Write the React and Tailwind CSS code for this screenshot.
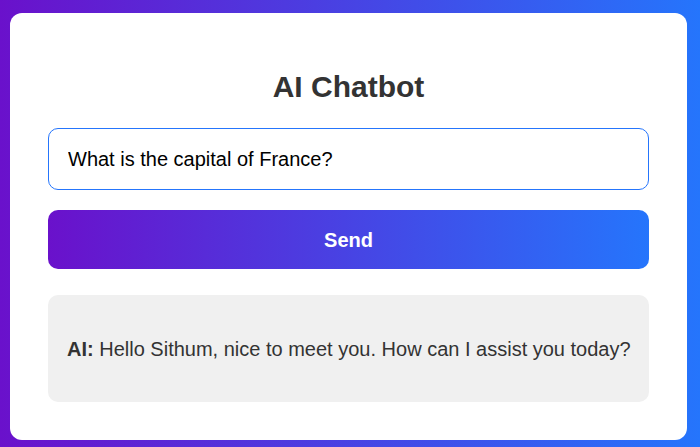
export default function App() {
  return (
    <div
      className="w-[700px] h-[447px] bg-[linear-gradient(90deg,#6a11cb,#2575fc)] pt-[13px] pl-[10px] pr-[13px]"
      style={{ fontFamily: '"Liberation Sans", Arial, sans-serif' }}
    >
      <div className="bg-white rounded-[12px] h-[427px] px-[38px] pt-[56px]">
        {/* Title */}
        <h1 className="text-center text-[30px] leading-[35px] font-bold text-[#333]">
          AI Chatbot
        </h1>

        {/* Input */}
        <input
          type="text"
          defaultValue="What is the capital of France?"
          className="mt-[24px] w-full h-[62px] border border-[#2575fc] rounded-[10px] px-[19px] text-[20px] text-black outline-none"
        />

        {/* Send button */}
        <button className="mt-[20px] w-full h-[59px] rounded-[10px] bg-[linear-gradient(90deg,#6a11cb,#2575fc)] text-white text-[20px] font-bold">
          Send
        </button>

        {/* Response */}
        <div className="mt-[26px] h-[107px] rounded-[10px] bg-[#f0f0f0] pl-[19px] pr-[8px] flex items-center text-[20px] text-[#333]">
          <p className="whitespace-nowrap">
            <strong>AI:</strong> Hello Sithum, nice to meet you. How can I assist you today?
          </p>
        </div>
      </div>
    </div>
  );
}
